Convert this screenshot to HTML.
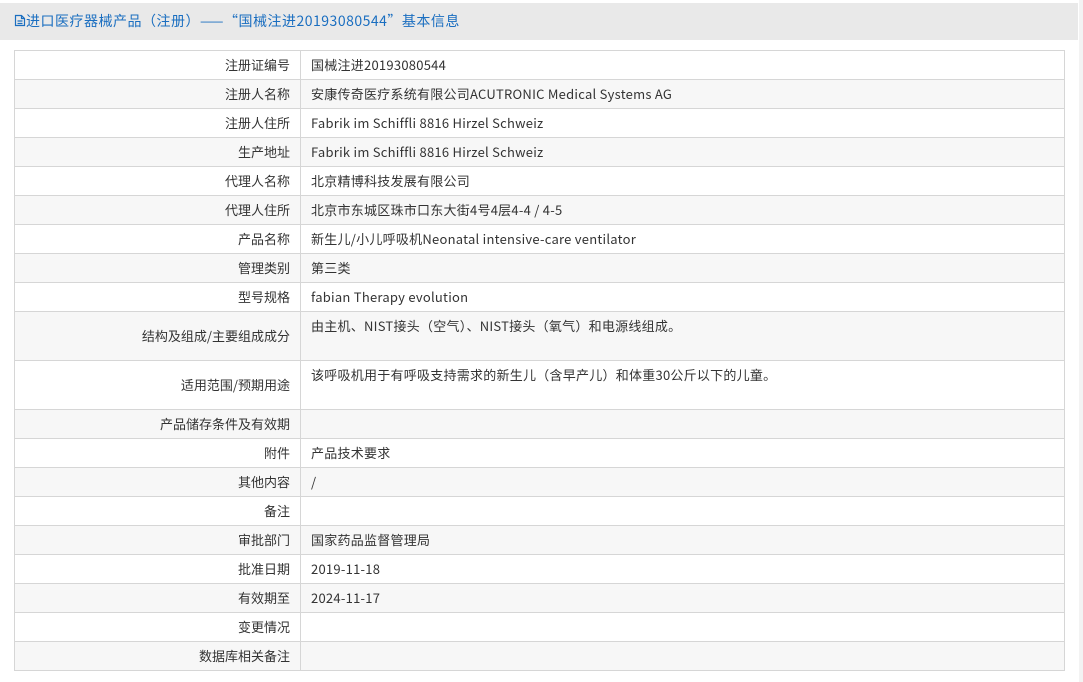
<!DOCTYPE html>
<html><head><meta charset="utf-8"><style>
body{margin:0;background:#fff;font-family:"Noto Sans CJK SC",sans-serif;font-size:13px;color:#333;width:1083px;height:682px;overflow:hidden;position:relative}
.hd{position:absolute;left:0;top:3px;width:1078px;height:37px;background:#e9e9e9;color:#1a6ec0;font-size:14px;line-height:37px;padding-left:14px;box-sizing:border-box;letter-spacing:0.5px}
table{position:absolute;left:14px;top:50px;width:1051px;border-collapse:collapse;border:1px solid #ccc}
td{border:1px solid #d6d6d6;height:28px;padding:0 10px;line-height:28px;white-space:nowrap}
td.v{letter-spacing:0.25px}
td.l{width:265px;text-align:right;vertical-align:middle}
tr:nth-child(even) td{background:#f7f7f7}
tr.t td{height:48px}
tr.t td.v{vertical-align:top}
.sb{position:absolute;left:1079px;top:0;width:4px;height:682px;background:#f3f3f3}
</style></head><body>
<div class="hd"><svg width="12" height="13" viewBox="0 0 12 13" style="vertical-align:-1px"><path d="M1.5 1.5h6l3 3v7h-9z M7.5 1.5v3h3 M3.5 7h5 M3.5 9.5h5" fill="none" stroke="#1a6ec0" stroke-width="1.2"/></svg>进口医疗器械产品（注册）——“国械注进20193080544”基本信息</div>
<div class="sb"></div>
<table>
<tr><td class="l">注册证编号</td><td class="v">国械注进20193080544</td></tr>
<tr><td class="l">注册人名称</td><td class="v">安康传奇医疗系统有限公司ACUTRONIC Medical Systems AG</td></tr>
<tr><td class="l">注册人住所</td><td class="v">Fabrik im Schiffli 8816 Hirzel Schweiz</td></tr>
<tr><td class="l">生产地址</td><td class="v">Fabrik im Schiffli 8816 Hirzel Schweiz</td></tr>
<tr><td class="l">代理人名称</td><td class="v">北京精博科技发展有限公司</td></tr>
<tr><td class="l">代理人住所</td><td class="v">北京市东城区珠市口东大街4号4层4-4 / 4-5</td></tr>
<tr><td class="l">产品名称</td><td class="v">新生儿/小儿呼吸机Neonatal intensive-care ventilator</td></tr>
<tr><td class="l">管理类别</td><td class="v">第三类</td></tr>
<tr><td class="l">型号规格</td><td class="v">fabian Therapy evolution</td></tr>
<tr class="t"><td class="l">结构及组成/主要组成成分</td><td class="v">由主机、NIST接头（空气）、NIST接头（氧气）和电源线组成。</td></tr>
<tr class="t"><td class="l">适用范围/预期用途</td><td class="v">该呼吸机用于有呼吸支持需求的新生儿（含早产儿）和体重30公斤以下的儿童。</td></tr>
<tr><td class="l">产品储存条件及有效期</td><td class="v"></td></tr>
<tr><td class="l">附件</td><td class="v">产品技术要求</td></tr>
<tr><td class="l">其他内容</td><td class="v">/</td></tr>
<tr><td class="l">备注</td><td class="v"></td></tr>
<tr><td class="l">审批部门</td><td class="v">国家药品监督管理局</td></tr>
<tr><td class="l">批准日期</td><td class="v">2019-11-18</td></tr>
<tr><td class="l">有效期至</td><td class="v">2024-11-17</td></tr>
<tr><td class="l">变更情况</td><td class="v"></td></tr>
<tr><td class="l">数据库相关备注</td><td class="v"></td></tr>
</table>
</body></html>
